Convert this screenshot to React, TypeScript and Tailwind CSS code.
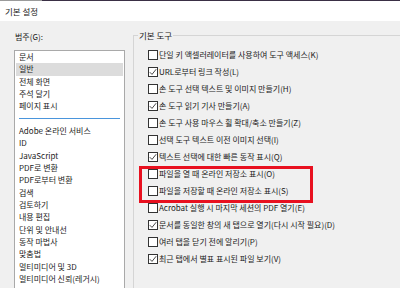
import React from "react";

const listTop = ["문서", "일반", "전체 화면", "주석 달기", "페이지 표시"];
const listBottom = [
  "Adobe 온라인 서비스",
  "ID",
  "JavaScript",
  "PDF로 변환",
  "PDF로부터 변환",
  "검색",
  "검토하기",
  "내용 편집",
  "단위 및 안내선",
  "동작 마법사",
  "맞춤법",
  "멀티미디어 및 3D",
  "멀티미디어 신뢰(레거시)",
];

const options: [string, boolean][] = [
  ["단일 키 액셀러레이터를 사용하여 도구 액세스(K)", false],
  ["URL로부터 링크 작성(L)", true],
  ["손 도구 선택 텍스트 및 이미지 만들기(H)", false],
  ["손 도구 읽기 기사 만들기(A)", true],
  ["손 도구 사용 마우스 휠 확대/축소 만들기(Z)", false],
  ["선택 도구 텍스트 이전 이미지 선택(I)", false],
  ["텍스트 선택에 대한 빠른 동작 표시(Q)", true],
  ["파일을 열 때 온라인 저장소 표시(O)", false],
  ["파일을 저장할 때 온라인 저장소 표시(S)", false],
  ["Acrobat 실행 시 마지막 세션의 PDF 열기(E)", false],
  ["문서를 동일한 창의 새 탭으로 열기(다시 시작 필요)(D)", true],
  ["여러 탭을 닫기 전에 알리기(P)", false],
  ["최근 탭에서 별표 표시된 파일 보기(V)", true],
];

function CheckBox({ checked }: { checked: boolean }) {
  return (
    <div className="w-[10px] h-[10px] border border-[#333333] bg-white flex items-center justify-center shrink-0">
      {checked && (
        <svg width="8" height="8" viewBox="0 0 8 8">
          <path d="M0.8 4.2 L3 6.4 L7.2 1.2" fill="none" stroke="#333" strokeWidth="0.9" />
        </svg>
      )}
    </div>
  );
}

export default function App() {
  return (
    <div className="w-[400px] h-[288px] overflow-hidden bg-[#f0f0f0] relative font-['Noto_Sans_CJK_KR',sans-serif] text-[8px] text-[#1b1b1b]">
      <div className="h-px flex">
        <div className="w-[42px] bg-[#9a9a9a]" />
        <div className="flex-1 bg-[#3a2f45]" />
      </div>
      <div className="h-[20px] bg-white flex items-center pl-[5px] text-[8.5px] text-[#222]">기본 설정</div>
      <div className="flex">
        <div className="w-[133px] shrink-0 pl-[14px] pr-[8px]">
          <div className="h-[29px] flex items-end pb-[7px] pl-[1px]">범주(G):</div>
          <div className="border border-[#a9a9a9] bg-white h-[260px] px-[1px]">
            {listTop.map((t, i) => (
              <div
                key={t}
                className={`h-[12.33px] leading-[12.33px] pl-[3px] whitespace-nowrap ${i === 1 ? "bg-[#dcdcdc]" : ""}`}
              >
                {t}
              </div>
            ))}
            <div className="h-[12.33px] flex items-center px-[3px]">
              <div className="h-px w-full bg-[#4a95dc]" />
            </div>
            {listBottom.map((t) => (
              <div key={t} className="h-[12.33px] leading-[12.33px] pl-[3px] whitespace-nowrap">
                {t}
              </div>
            ))}
          </div>
        </div>
        <div className="flex-1 pt-[14px]">
          <div className="relative border-l border-t border-[#d5d5d5] h-[260px] pl-[14px] pt-[11px]">
            <div className="absolute left-[4px] top-[-7px] px-[1px] bg-[#f0f0f0] leading-[12px] text-[8.5px]">기본 도구</div>
            {options.map(([t, c]) => (
              <div key={t} className="h-[16.94px] flex items-center gap-[1px] whitespace-nowrap">
                <CheckBox checked={c} />
                <span>{t}</span>
              </div>
            ))}
          </div>
        </div>
      </div>
      <div className="absolute left-[139px] top-[166px] w-[174px] h-[37px] border-[3px] border-[#e8101f]" />
    </div>
  );
}
